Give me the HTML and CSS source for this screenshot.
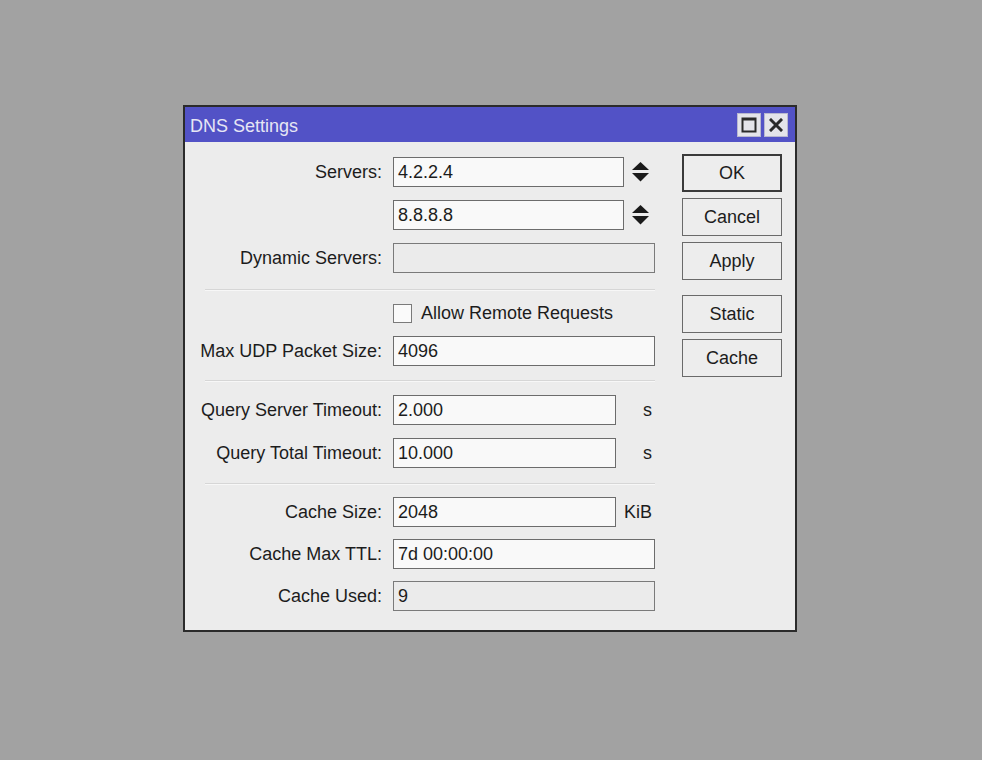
FILE: index.html
```html
<!DOCTYPE html>
<html>
<head>
<meta charset="utf-8">
<title>DNS Settings</title>
<link rel="stylesheet" href="styles.css">
</head>
<body>
<div class="window">
  <div class="titlebar">
    <span class="title">DNS Settings</span>
    <div class="tb-buttons">
      <span class="tb-btn"><svg width="16" height="16" viewBox="0 0 16 16"><rect x="1.5" y="1.5" width="13" height="13" fill="none" stroke="#2a2a2a" stroke-width="2"/><line x1="1" y1="2.5" x2="15" y2="2.5" stroke="#2a2a2a" stroke-width="2"/></svg></span>
      <span class="tb-btn"><svg width="14" height="14" viewBox="0 0 14 14"><path d="M2 2 L12 12 M12 2 L2 12" stroke="#2a2a2a" stroke-width="3" stroke-linecap="square"/></svg></span>
    </div>
  </div>
  <div class="content">
    <div class="form">
      <div class="section s1">
        <div class="row">
          <span class="lbl">Servers:</span>
          <div class="field w-srv">4.2.2.4</div>
          <svg class="spin" width="17" height="20" viewBox="0 0 17 20"><polygon points="8.5,0 17,8 0,8" fill="#1a1a1a"/><polygon points="0,11 17,11 8.5,19.5" fill="#1a1a1a"/></svg>
        </div>
        <div class="row">
          <span class="lbl"></span>
          <div class="field w-srv">8.8.8.8</div>
          <svg class="spin" width="17" height="20" viewBox="0 0 17 20"><polygon points="8.5,0 17,8 0,8" fill="#1a1a1a"/><polygon points="0,11 17,11 8.5,19.5" fill="#1a1a1a"/></svg>
        </div>
        <div class="row">
          <span class="lbl">Dynamic Servers:</span>
          <div class="field w-full disabled"></div>
        </div>
      </div>
      <div class="sep"></div>
      <div class="section s2">
        <div class="row">
          <span class="lbl"></span>
          <span class="check"></span>
          <span class="check-label">Allow Remote Requests</span>
        </div>
        <div class="row">
          <span class="lbl">Max UDP Packet Size:</span>
          <div class="field w-full">4096</div>
        </div>
      </div>
      <div class="sep"></div>
      <div class="section s3">
        <div class="row">
          <span class="lbl">Query Server Timeout:</span>
          <div class="field w-short">2.000</div>
          <span class="unit">s</span>
        </div>
        <div class="row">
          <span class="lbl">Query Total Timeout:</span>
          <div class="field w-short">10.000</div>
          <span class="unit">s</span>
        </div>
      </div>
      <div class="sep"></div>
      <div class="section s4">
        <div class="row">
          <span class="lbl">Cache Size:</span>
          <div class="field w-short">2048</div>
          <span class="unit">KiB</span>
        </div>
        <div class="row">
          <span class="lbl">Cache Max TTL:</span>
          <div class="field w-full">7d 00:00:00</div>
        </div>
        <div class="row">
          <span class="lbl">Cache Used:</span>
          <div class="field w-full disabled">9</div>
        </div>
      </div>
    </div>
    <div class="buttons">
      <div class="btn default">OK</div>
      <div class="btn">Cancel</div>
      <div class="btn">Apply</div>
      <div class="btn gap">Static</div>
      <div class="btn">Cache</div>
    </div>
  </div>
</div>
</body>
</html>
```

FILE: styles.css
```css
html, body {
  margin: 0;
  padding: 0;
}
body {
  background: #a2a2a2;
  width: 982px;
  height: 760px;
  overflow: hidden;
  font-family: "Liberation Sans", Arial, sans-serif;
  font-size: 18px;
  color: #1c1c1c;
  padding: 105px 0 0 183px;
  box-sizing: border-box;
}
.window {
  width: 614px;
  box-sizing: border-box;
  border: 2px solid #2b2b2b;
  background: #ececec;
}
.titlebar {
  height: 35px;
  background: #5252c6;
  display: flex;
  align-items: center;
  justify-content: space-between;
  padding: 0 7px 0 5px;
}
.title {
  color: #e6e6f4;
  font-size: 18px;
  line-height: 1;
  padding-top: 2px;
}
.tb-buttons {
  display: flex;
  gap: 3px;
  padding-top: 1px;
}
.tb-btn {
  width: 24px;
  height: 24px;
  box-sizing: border-box;
  background: #e4e4ea;
  border: 1px solid #b8b8d0;
  display: flex;
  align-items: center;
  justify-content: center;
}
.content {
  display: flex;
}
.form {
  flex: 0 0 497px;
  padding: 15px 0 19px 0;
}
.section {
  display: flex;
  flex-direction: column;
  gap: 13px;
}
.s2 { margin-top: 7px; gap: 8px; }
.s3 { margin-top: 13px; }
.s4 { margin-top: 12px; gap: 12px; }
.row {
  display: flex;
  align-items: center;
  height: 30px;
}
.lbl {
  width: 197px;
  margin-right: 11px;
  text-align: right;
  white-space: nowrap;
  flex: none;
}
.field {
  height: 30px;
  box-sizing: border-box;
  border: 1px solid #6c6c6c;
  background: #f9f9f9;
  padding: 0 4px;
  display: flex;
  align-items: center;
  flex: none;
}
.field.disabled {
  background: #ebebeb;
  border-color: #7a7a7a;
}
.w-srv { width: 231px; }
.w-full { width: 262px; }
.w-short { width: 223px; }
.spin {
  margin-left: 8px;
  flex: none;
}
.unit {
  width: 36px;
  text-align: right;
  flex: none;
}
.check {
  width: 19px;
  height: 19px;
  box-sizing: border-box;
  border: 1px solid #7a7a7a;
  background: #fafafa;
  flex: none;
}
.check-label {
  margin-left: 9px;
}
.sep {
  margin: 16px 0 0 20px;
  width: 450px;
  height: 1px;
  background: #d6d6d6;
  border-bottom: 1px solid #f7f7f7;
}
.s2 + .sep { margin-top: 14px; }
.s3 + .sep { margin-top: 15px; }
.buttons {
  flex: 0 0 100px;
  padding-top: 12px;
  display: flex;
  flex-direction: column;
  gap: 6px;
}
.btn {
  height: 38px;
  box-sizing: border-box;
  border: 1px solid #6a6a6a;
  background: #ededed;
  display: flex;
  align-items: center;
  justify-content: center;
}
.btn.default {
  border: 2px solid #3a3a3a;
}
.btn.gap {
  margin-top: 9px;
}
```
